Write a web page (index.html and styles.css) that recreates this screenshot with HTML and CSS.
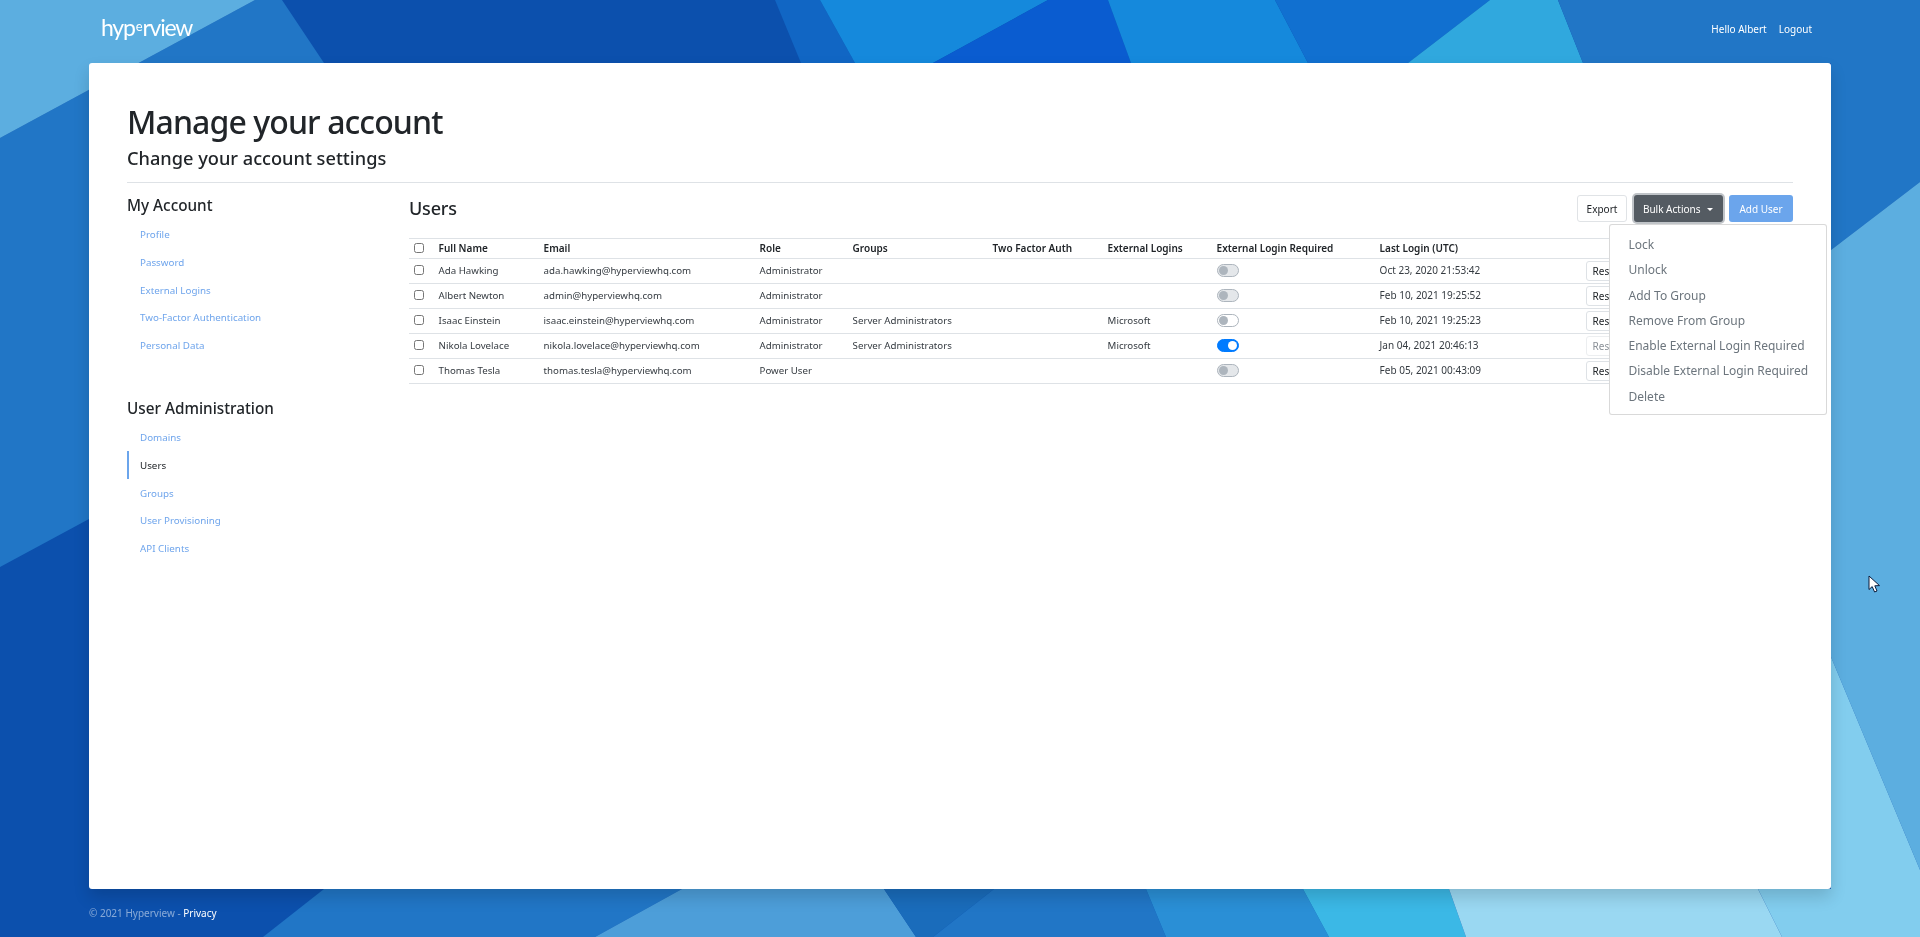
FILE: index.html
```html
<!DOCTYPE html>
<html>
<head>
    <title>Manage your account</title>
    <link rel="stylesheet" href="styles.css">
</head>
<body>
    <svg class="backdrop" viewBox="0 0 1920 937" preserveAspectRatio="none">
        <rect width="1920" height="937" fill="#0c50ad"/>
        <polygon fill="#2176c6" points="255,0 282,0 324,63 330,70 89,519 0,567 0,138"/>
        <polygon fill="#5caee0" points="0,0 255,0 0,138"/>
        <polygon fill="#1166c4" points="775,0 820,0 855,63 801,63"/>
        <polygon fill="#1589dc" points="820,0 1048,0 933,63 855,63"/>
        <polygon fill="#0a5cd0" points="1048,0 1108,0 1131,63 933,63"/>
        <polygon fill="#1589dc" points="1108,0 1275,0 1308,63 1131,63"/>
        <polygon fill="#1170d0" points="1275,0 1490,0 1408,63 1308,63"/>
        <polygon fill="#30a8de" points="1490,0 1558,0 1583,63 1408,63"/>
        <polygon fill="#2176c6" points="1558,0 1920,0 1920,182 1831,250 1831,63 1583,63"/>
        <polygon fill="#5caee0" points="1831,250 1920,182 1920,870 1831,657"/>
        <polygon fill="#82cdee" points="1831,657 1920,870 1920,937 1782,937 1758,889 1831,889"/>
        <polygon fill="#2176c6" points="324,889 682,889 595,937 263,937"/>
        <polygon fill="#4d9ed9" points="682,889 884,889 916,937 595,937"/>
        <polygon fill="#1a6cbb" points="884,889 994,889 933,937 916,937"/>
        <polygon fill="#2176c6" points="994,889 1146,889 1166,937 933,937"/>
        <polygon fill="#2a8fd6" points="1146,889 1303,889 1329,937 1166,937"/>
        <polygon fill="#3bb8e6" points="1303,889 1449,889 1466,937 1329,937"/>
        <polygon fill="#9ad8f2" points="1449,889 1758,889 1782,937 1466,937"/>
    </svg>

    <div class="page">
        <header class="topbar">
            <a class="logo" href="#">hyp<span class="logo-e">e</span>rview</a>
            <nav class="topnav">
                <a href="#">Hello Albert</a>
                <a href="#">Logout</a>
            </nav>
        </header>

        <main class="card">
            <h1>Manage your account</h1>
            <h2>Change your account settings</h2>
            <hr>
            <div class="columns">
                <aside class="sidebar">
                    <h4>My Account</h4>
                    <ul class="sidenav">
                        <li><a href="#">Profile</a></li>
                        <li><a href="#">Password</a></li>
                        <li><a href="#">External Logins</a></li>
                        <li><a href="#">Two-Factor Authentication</a></li>
                        <li><a href="#">Personal Data</a></li>
                    </ul>
                    <h4 class="second">User Administration</h4>
                    <ul class="sidenav">
                        <li><a href="#">Domains</a></li>
                        <li class="active"><a href="#">Users</a></li>
                        <li><a href="#">Groups</a></li>
                        <li><a href="#">User Provisioning</a></li>
                        <li><a href="#">API Clients</a></li>
                    </ul>
                </aside>
                <section class="content">
                    <div class="toolbar">
                        <h3>Users</h3>
                        <div class="actions">
                            <button class="btn btn-light">Export</button>
                            <div class="bulk">
                                <button class="btn btn-dark">Bulk Actions <span class="caret"></span></button>
                                <div class="dropdown">
                                    <a href="#">Lock</a>
                                    <a href="#">Unlock</a>
                                    <a href="#">Add To Group</a>
                                    <a href="#">Remove From Group</a>
                                    <a href="#">Enable External Login Required</a>
                                    <a href="#">Disable External Login Required</a>
                                    <a href="#">Delete</a>
                                </div>
                            </div>
                            <button class="btn btn-blue">Add User</button>
                        </div>
                    </div>
                    <table class="users">
                        <colgroup>
                            <col class="c-check"><col class="c-name"><col class="c-email"><col class="c-role"><col class="c-groups">
                            <col class="c-two"><col class="c-ext"><col class="c-req"><col class="c-last"><col class="c-act">
                        </colgroup>
                        <thead>
                            <tr>
                                <th><input type="checkbox"></th>
                                <th>Full Name</th>
                                <th>Email</th>
                                <th>Role</th>
                                <th>Groups</th>
                                <th>Two Factor Auth</th>
                                <th>External Logins</th>
                                <th>External Login Required</th>
                                <th>Last Login (UTC)</th>
                                <th></th>
                            </tr>
                        </thead>
                        <tbody>
                            <tr>
                                <td><input type="checkbox"></td>
                                <td>Ada Hawking</td>
                                <td>ada.hawking@hyperviewhq.com</td>
                                <td>Administrator</td>
                                <td></td>
                                <td></td>
                                <td></td>
                                <td><span class="switch"></span></td>
                                <td class="date">Oct 23, 2020 21:53:42</td>
                                <td><button class="btn-reset">Reset</button></td>
                            </tr>
                            <tr>
                                <td><input type="checkbox"></td>
                                <td>Albert Newton</td>
                                <td>admin@hyperviewhq.com</td>
                                <td>Administrator</td>
                                <td></td>
                                <td></td>
                                <td></td>
                                <td><span class="switch"></span></td>
                                <td class="date">Feb 10, 2021 19:25:52</td>
                                <td><button class="btn-reset">Reset</button></td>
                            </tr>
                            <tr>
                                <td><input type="checkbox"></td>
                                <td>Isaac Einstein</td>
                                <td>isaac.einstein@hyperviewhq.com</td>
                                <td>Administrator</td>
                                <td>Server Administrators</td>
                                <td></td>
                                <td>Microsoft</td>
                                <td><span class="switch switch-white"></span></td>
                                <td class="date">Feb 10, 2021 19:25:23</td>
                                <td><button class="btn-reset">Reset</button></td>
                            </tr>
                            <tr>
                                <td><input type="checkbox"></td>
                                <td>Nikola Lovelace</td>
                                <td>nikola.lovelace@hyperviewhq.com</td>
                                <td>Administrator</td>
                                <td>Server Administrators</td>
                                <td></td>
                                <td>Microsoft</td>
                                <td><span class="switch switch-on"></span></td>
                                <td class="date">Jan 04, 2021 20:46:13</td>
                                <td><button class="btn-reset off">Reset</button></td>
                            </tr>
                            <tr>
                                <td><input type="checkbox"></td>
                                <td>Thomas Tesla</td>
                                <td>thomas.tesla@hyperviewhq.com</td>
                                <td>Power User</td>
                                <td></td>
                                <td></td>
                                <td></td>
                                <td><span class="switch"></span></td>
                                <td class="date">Feb 05, 2021 00:43:09</td>
                                <td><button class="btn-reset">Reset</button></td>
                            </tr>
                        </tbody>
                    </table>
                </section>
            </div>
        </main>

        <footer class="foot">
            © 2021 Hyperview - <a href="#">Privacy</a>
        </footer>
    </div>

    <svg class="pointer" width="14" height="20" viewBox="0 0 14 20">
        <path d="M1 1 L1 14.5 L4.2 11.6 L6.6 17 L9 16 L6.8 10.8 L11.5 10.6 Z" fill="#fff" stroke="#0a1a3a" stroke-width="1"/>
    </svg>
</body>
</html>
```

FILE: styles.css
```css
* {
    margin: 0;
    box-sizing: border-box;
}

html, body {
    height: 937px;
    overflow: hidden;
}

body {
    font-family: "Noto Sans", "Liberation Sans", sans-serif;
    font-size: 10px;
    color: #212529;
}

a {
    text-decoration: none;
}

.backdrop {
    position: fixed;
    top: 0;
    left: 0;
    width: 1920px;
    height: 937px;
    z-index: -1;
}

.page {
    display: flex;
    flex-direction: column;
    height: 937px;
}

.topbar {
    height: 63px;
    flex: none;
    display: flex;
    align-items: center;
    justify-content: space-between;
    padding: 0 108px 0 101px;
}

.logo {
    color: #fff;
    font-family: Lato, "Noto Sans", sans-serif;
    font-weight: 400;
    font-size: 23px;
    line-height: 24px;
    letter-spacing: -1.2px;
    margin-top: -5px;
}

.logo-e {
    font-size: 13px;
    position: relative;
    top: -5px;
    margin: 0 1px;
}

.topnav {
    display: flex;
    gap: 12px;
    margin-top: -5px;
}

.topnav a {
    color: #fff;
    font-size: 10px;
    line-height: 14px;
}

.card {
    height: 826px;
    flex: none;
    margin: 0 89px;
    padding: 39px 38px 0 38px;
    background: #fff;
    border-radius: 3px;
    box-shadow: 0 8px 16px rgba(0, 0, 0, 0.15);
}

h1 {
    font-size: 32px;
    font-weight: 500;
    line-height: 40px;
    letter-spacing: -0.9px;
}

h2 {
    font-size: 18.2px;
    font-weight: 500;
    line-height: 24px;
    margin-top: 4px;
}

hr {
    border: 0;
    border-top: 1px solid #dee2e6;
    margin-top: 12px;
}

.columns {
    display: flex;
}

.sidebar {
    width: 282px;
    flex: none;
    padding-top: 11px;
}

h4 {
    font-size: 15.3px;
    font-weight: 500;
    line-height: 22px;
}

h4.second {
    margin-top: 38px;
}

.sidenav {
    list-style: none;
    padding: 0;
    margin-top: 4px;
}

.sidenav li {
    height: 27.8px;
    border-left: 2px solid transparent;
    padding-left: 11px;
    line-height: 29.8px;
}

.sidenav a {
    color: #6fa5ec;
    font-size: 9.8px;
}

.sidenav .active {
    border-left-color: #6ba5ec;
}

.sidenav .active a {
    color: #212529;
}

.content {
    flex: 1;
    padding-top: 12px;
}

.toolbar {
    display: flex;
    justify-content: space-between;
    align-items: center;
    height: 27px;
}

h3 {
    font-size: 18px;
    font-weight: 500;
    letter-spacing: -0.2px;
    margin-top: -2px;
}

.actions {
    display: flex;
    gap: 6.5px;
}

.btn {
    height: 27px;
    font: inherit;
    font-size: 10px;
    border-radius: 3px;
    border: 1px solid transparent;
    cursor: pointer;
}

.btn-light {
    width: 50px;
    background: #fff;
    border-color: #e0e3e6;
    color: #212529;
}

.btn-dark {
    width: 89px;
    background: #545b62;
    color: #fff;
    box-shadow: 0 0 0 2px rgba(130, 138, 145, 0.5);
}

.btn-blue {
    width: 64px;
    background: #6ba5ec;
    color: #fff;
}

.caret {
    display: inline-block;
    margin-left: 4px;
    vertical-align: 2px;
    border-top: 3px solid #fff;
    border-left: 3px solid transparent;
    border-right: 3px solid transparent;
}

.bulk {
    position: relative;
}

.dropdown {
    position: absolute;
    top: 29px;
    left: -25px;
    width: 218px;
    padding: 6px 0;
    background: #fff;
    border: 1px solid rgba(0, 0, 0, 0.15);
    border-radius: 3px;
    z-index: 5;
}

.dropdown a {
    display: block;
    height: 25.3px;
    line-height: 27px;
    padding-left: 19px;
    font-size: 12px;
    color: #6c757d;
    white-space: nowrap;
}

.users {
    width: 100%;
    margin-top: 16px;
    table-layout: fixed;
    border-collapse: separate;
    border-spacing: 0;
}

.c-check { width: 24.6px; }
.c-name { width: 105px; }
.c-email { width: 216px; }
.c-role { width: 93px; }
.c-groups { width: 140px; }
.c-two { width: 115px; }
.c-ext { width: 109px; }
.c-req { width: 163px; }
.c-last { width: 206px; }

.users th {
    height: 21px;
    padding: 0 5px 1px;
    text-align: left;
    font-weight: 600;
    border-top: 1px solid #dee2e6;
    border-bottom: 1px solid #dee2e6;
    white-space: nowrap;
}

.users td {
    height: 25px;
    padding: 0 5px 2px;
    font-size: 9.7px;
    color: #343a40;
    border-bottom: 1px solid #dee2e6;
    white-space: nowrap;
}

.users td.date {
    font-size: 10px;
}

.users input {
    display: block;
    width: 10px;
    height: 10px;
    margin: 0;
}

.switch {
    display: block;
    position: relative;
    width: 22px;
    height: 13px;
    background: #e4e7ea;
    border: 1px solid #adb5bd;
    border-radius: 7px;
}

.switch::after {
    content: "";
    position: absolute;
    top: 1px;
    left: 1px;
    width: 9px;
    height: 9px;
    border-radius: 50%;
    background: #adb5bd;
}

.switch-white {
    background: #fff;
}

.switch-on {
    background: #007bff;
    border-color: #007bff;
}

.switch-on::after {
    left: 10px;
    background: #fff;
}

.btn-reset {
    display: block;
    width: 60px;
    height: 20px;
    margin-top: 2px;
    padding: 0 0 0 6px;
    font: inherit;
    font-size: 10px;
    text-align: left;
    color: #212529;
    background: #fff;
    border: 1px solid #dee2e6;
    border-radius: 3px;
}

.btn-reset.off {
    color: #8a9097;
    border-color: #eceef0;
}

.foot {
    padding: 16px 0 0 89px;
    line-height: 16px;
    color: rgba(255, 255, 255, 0.5);
}

.foot a {
    color: #fff;
}

.pointer {
    position: fixed;
    left: 1868px;
    top: 575px;
}
```
